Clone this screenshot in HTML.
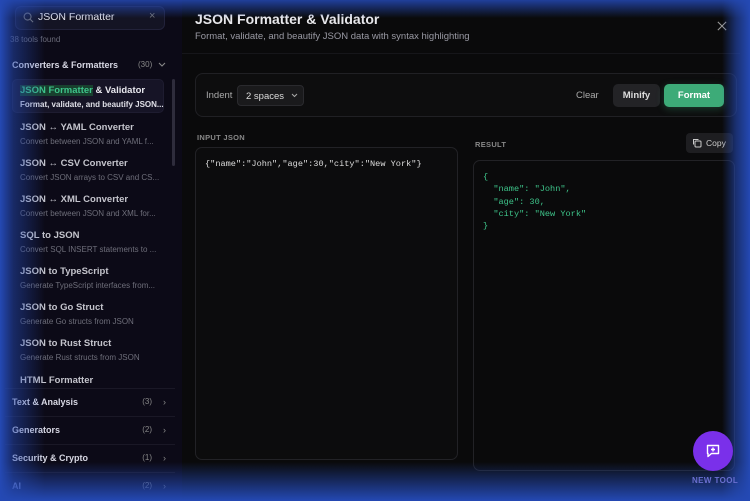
<!DOCTYPE html>
<html><head><meta charset="utf-8"><style>
*{margin:0;padding:0;box-sizing:border-box}
body{width:750px;height:501px;overflow:hidden;background:#0a0a0b;font-family:"Liberation Sans",sans-serif;position:relative}
.abs{position:absolute}
#side{left:0;top:0;width:182px;height:501px;background:#0c0a17}
#sidefade{left:0;top:0;width:45px;height:501px;background:linear-gradient(90deg,#2449b4 0%,rgba(36,73,180,.5) 30%,rgba(36,73,180,0))}
#maintop{left:0;top:0;width:750px;height:18px;background:linear-gradient(180deg,rgba(36,73,180,.85),rgba(36,73,180,0))}
#mainright{left:722px;top:0;width:28px;height:501px;background:linear-gradient(90deg,rgba(36,73,180,0),rgba(36,73,180,.6) 50%,#2449b4)}
#mainbot{left:0;top:462px;width:750px;height:39px;background:linear-gradient(180deg,rgba(36,73,180,0),rgba(36,73,180,.5) 50%,#2449b4)}
.t{color:#e8e8ec;font-weight:bold}
.item{position:absolute;left:20px;font-size:9.5px}
.item b{display:block;color:#c4c4cc;font-weight:bold}
.item span{display:block;color:#6e6e7a;font-size:8px;margin-top:4px}
.cat{position:absolute;left:12px;width:154px;font-size:9px;color:#d8d8e4;font-weight:bold}
.cat i{position:absolute;right:14px;font-style:normal;font-weight:normal;color:#888;font-size:8px}
.cat em{position:absolute;right:0;font-style:normal;color:#888;font-weight:normal}
.line{position:absolute;left:5px;width:170px;height:1px;background:#1a1826}
.mono{font-family:"Liberation Mono",monospace;font-size:8.6px}
</style></head><body>
<div class="abs" id="side"></div>

<!-- sidebar -->
<div class="abs" style="left:15px;top:6px;width:150px;height:24px;background:#141424;border:1px solid #22223a;border-radius:6px"></div>
<svg class="abs" style="left:23px;top:12px" width="11" height="11" viewBox="0 0 12 12"><circle cx="5" cy="5" r="3.8" fill="none" stroke="#777" stroke-width="1.2"/><path d="M8 8l3 3" stroke="#777" stroke-width="1.2"/></svg>
<div class="abs" style="left:38px;top:11px;font-size:10.5px;color:#e4e4ec">JSON Formatter</div>
<div class="abs" style="left:149px;top:10px;font-size:11px;color:#777">×</div>
<div class="abs" style="left:10px;top:35px;font-size:8px;color:#6a6a78">38 tools found</div>
<div class="abs" style="left:12px;top:60px;font-size:9px;color:#d8d8e4;font-weight:bold">Converters &amp; Formatters</div>
<div class="abs" style="left:138px;top:60px;font-size:8px;color:#888">(30)</div>
<svg class="abs" style="left:158px;top:62px" width="8" height="6" viewBox="0 0 8 6"><path d="M1 1l3 3 3-3" fill="none" stroke="#888" stroke-width="1.1"/></svg>
<div class="abs" style="left:12px;top:79px;width:152px;height:34px;background:#161426;border:1px solid #1e1c30;border-radius:5px"></div>
<div class="abs" style="left:172px;top:79px;width:3px;height:87px;background:#2e2c3c;border-radius:2px"></div>
<div class="item" style="top:85px"><b style="color:#e8e8ee"><span style="display:inline;background:#18402e;color:#3ec48a;font-size:9.5px;margin:0">JSON Formatter</span> &amp; Validator</b><span style="color:#e0e0e8;font-weight:bold">Format, validate, and beautify JSON...</span></div>
<div class="item" style="top:122px"><b>JSON ↔ YAML Converter</b><span>Convert between JSON and YAML f...</span></div>
<div class="item" style="top:158px"><b>JSON ↔ CSV Converter</b><span>Convert JSON arrays to CSV and CS...</span></div>
<div class="item" style="top:194px"><b>JSON ↔ XML Converter</b><span>Convert between JSON and XML for...</span></div>
<div class="item" style="top:230px"><b>SQL to JSON</b><span>Convert SQL INSERT statements to ...</span></div>
<div class="item" style="top:266px"><b>JSON to TypeScript</b><span>Generate TypeScript interfaces from...</span></div>
<div class="item" style="top:302px"><b>JSON to Go Struct</b><span>Generate Go structs from JSON</span></div>
<div class="item" style="top:338px"><b>JSON to Rust Struct</b><span>Generate Rust structs from JSON</span></div>
<div class="item" style="top:375px"><b>HTML Formatter</b></div>
<div class="line" style="top:388px"></div>
<div class="cat" style="top:397px">Text &amp; Analysis<i>(3)</i><em>›</em></div>
<div class="line" style="top:416px"></div>
<div class="cat" style="top:425px">Generators<i>(2)</i><em>›</em></div>
<div class="line" style="top:444px"></div>
<div class="cat" style="top:453px">Security &amp; Crypto<i>(1)</i><em>›</em></div>
<div class="line" style="top:472px"></div>
<div class="cat" style="top:481px;color:#b8bce0">AI<i>(2)</i><em>›</em></div>

<!-- main -->
<div class="abs t" style="left:195px;top:11px;font-size:14px">JSON Formatter &amp; Validator</div>
<div class="abs" style="left:195px;top:31px;font-size:9.5px;color:#9a9aa4">Format, validate, and beautify JSON data with syntax highlighting</div>
<svg class="abs" style="left:717px;top:21px" width="10" height="10" viewBox="0 0 12 12"><path d="M1 1l10 10M11 1L1 11" stroke="#999" stroke-width="1.3"/></svg>
<div class="abs" style="left:182px;top:53px;width:558px;height:1px;background:#16161a"></div>

<div class="abs" style="left:195px;top:73px;width:542px;height:44px;border:1px solid #202024;border-radius:8px;background:#0d0d0e"></div>
<div class="abs" style="left:206px;top:90px;font-size:9.5px;color:#aaa">Indent</div>
<div class="abs" style="left:237px;top:85px;width:67px;height:21px;background:#1a1a1c;border:1px solid #2a2a2e;border-radius:4px;font-size:9.5px;color:#ddd;padding:5px 0 0 8px">2 spaces</div>
<svg class="abs" style="left:291px;top:93px" width="7" height="5" viewBox="0 0 7 5"><path d="M1 1l2.5 2.5L6 1" fill="none" stroke="#aaa" stroke-width="1"/></svg>
<div class="abs" style="left:576px;top:90px;font-size:9.5px;color:#aaa">Clear</div>
<div class="abs" style="left:613px;top:84px;width:47px;height:23px;background:#232326;border-radius:5px;font-size:9.5px;color:#ddd;text-align:center;line-height:23px;font-weight:bold">Minify</div>
<div class="abs" style="left:664px;top:84px;width:60px;height:23px;background:#3dab78;border-radius:5px;font-size:9.5px;color:#fff;text-align:center;line-height:23px;font-weight:bold;box-shadow:0 2px 8px rgba(61,171,120,.3)">Format</div>

<div class="abs" style="left:197px;top:133px;font-size:7.5px;color:#888;font-weight:bold;letter-spacing:.3px">INPUT JSON</div>
<div class="abs" style="left:195px;top:147px;width:263px;height:313px;border:1px solid #222226;border-radius:7px;background:#0c0c0d"></div>
<div class="abs mono" style="left:205px;top:159px;color:#ddd">{"name":"John","age":30,"city":"New York"}</div>

<div class="abs" style="left:475px;top:140px;font-size:7.5px;color:#888;font-weight:bold;letter-spacing:.3px">RESULT</div>
<div class="abs" style="left:686px;top:133px;width:47px;height:20px;background:#1e1e21;border-radius:4px;font-size:8.5px;color:#ccc;padding:5px 0 0 20px">Copy</div>
<svg class="abs" style="left:692px;top:138px" width="10" height="10" viewBox="0 0 10 10"><rect x="3" y="3" width="6" height="6" rx="1" fill="none" stroke="#ccc"/><path d="M1.5 6.5V1.5h5" fill="none" stroke="#ccc"/></svg>
<div class="abs" style="left:473px;top:160px;width:262px;height:311px;border:1px solid #222226;border-radius:7px;background:#0a0a0b"></div>
<pre class="abs mono" style="left:483px;top:171px;color:#3ec48a;line-height:12.3px">{
  "name": "John",
  "age": 30,
  "city": "New York"
}</pre>

<div class="abs" id="sidefade"></div>
<div class="abs" id="maintop"></div>
<div class="abs" id="mainright"></div>
<div class="abs" id="mainbot"></div>

<div class="abs" style="left:693px;top:431px;width:40px;height:40px;border-radius:50%;background:#7a30ea"></div>
<svg class="abs" style="left:705px;top:443px" width="16" height="16" viewBox="0 0 16 16"><path d="M2.5 2.5h11v8h-7l-3.5 3v-3h-0.5z" fill="none" stroke="#fff" stroke-width="1.4" stroke-linejoin="round"/><path d="M8 4.5v4M6 6.5h4" stroke="#fff" stroke-width="1.4"/></svg>
<div class="abs" style="left:692px;top:476px;font-size:8px;color:#6a6fd0;font-weight:bold;letter-spacing:.4px">NEW TOOL</div>
</body></html>
